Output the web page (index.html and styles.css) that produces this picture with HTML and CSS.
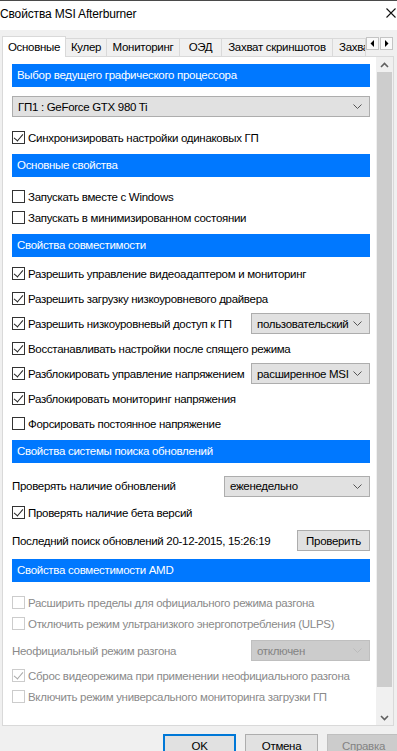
FILE: index.html
```html
<!DOCTYPE html>
<html lang="ru">
<head>
<meta charset="utf-8">
<title>Свойства MSI Afterburner</title>
<link rel="stylesheet" href="styles.css">
</head>
<body>
<div class="titlebar">
	<span class="title">Свойства MSI Afterburner</span>
	<svg class="close" width="10" height="10" viewBox="0 0 10 10"><path d="M0.5 0.5L9.5 9.5M9.5 0.5L0.5 9.5" stroke="#111" stroke-width="1.1" fill="none"/></svg>
</div>
<div class="tabs">
	<div class="tab active w64">Основные</div>
	<div class="tab w41">Кулер</div>
	<div class="tab w73">Мониторинг</div>
	<div class="tab w42">ОЭД</div>
	<div class="tab w111">Захват скриншотов</div>
	<div class="tab cut">Захват видео</div>
	<div class="tabarrow"><svg width="5" height="7" viewBox="0 0 5 7"><path d="M4 0L0.5 3.5L4 7Z" fill="#000"/></svg></div>
	<div class="tabarrow"><svg width="5" height="7" viewBox="0 0 5 7"><path d="M1 0L4.5 3.5L1 7Z" fill="#000"/></svg></div>
</div>
<div class="panel">
	<div class="content">
		<div class="hdr">Выбор ведущего графического процессора</div>
		<div class="combo full gap9"><span>ГП1 : GeForce GTX 980 Ti</span><svg width="9" height="5" viewBox="0 0 9 5"><path d="M0.5 0.5L4.5 4.5L8.5 0.5" stroke="#555" fill="none"/></svg></div>
		<div class="row gap10"><span class="cb on"></span>Синхронизировать настройки одинаковых ГП</div>

		<div class="hdr gap6">Основные свойства</div>
		<div class="row gap9"><span class="cb"></span>Запускать вместе с Windows</div>
		<div class="row"><span class="cb"></span>Запускать в минимизированном состоянии</div>

		<div class="hdr gap6">Свойства совместимости</div>
		<div class="row tall gap4"><span class="cb on"></span>Разрешить управление видеоадаптером и мониторинг</div>
		<div class="row tall"><span class="cb on"></span>Разрешить загрузку низкоуровневого драйвера</div>
		<div class="row tall"><span class="cb on"></span><span class="grow">Разрешить низкоуровневый доступ к ГП</span><div class="combo"><span>пользовательский</span><svg width="9" height="5" viewBox="0 0 9 5"><path d="M0.5 0.5L4.5 4.5L8.5 0.5" stroke="#555" fill="none"/></svg></div></div>
		<div class="row tall"><span class="cb on"></span>Восстанавливать настройки после спящего режима</div>
		<div class="row tall"><span class="cb on"></span><span class="grow">Разблокировать управление напряжением</span><div class="combo"><span>расширенное MSI</span><svg width="9" height="5" viewBox="0 0 9 5"><path d="M0.5 0.5L4.5 4.5L8.5 0.5" stroke="#555" fill="none"/></svg></div></div>
		<div class="row tall"><span class="cb on"></span>Разблокировать мониторинг напряжения</div>
		<div class="row tall"><span class="cb"></span>Форсировать постоянное напряжение</div>

		<div class="hdr gap4">Свойства системы поиска обновлений</div>
		<div class="row mid gap12"><span class="grow">Проверять наличие обновлений</span><div class="combo wide"><span>еженедельно</span><svg width="9" height="5" viewBox="0 0 9 5"><path d="M0.5 0.5L4.5 4.5L8.5 0.5" stroke="#555" fill="none"/></svg></div></div>
		<div class="row gap5"><span class="cb on"></span>Проверять наличие бета версий</div>
		<div class="row gap7"><span class="grow">Последний поиск обновлений 20-12-2015, 15:26:19</span><div class="btn small">Проверить</div></div>

		<div class="hdr gap8">Свойства совместимости AMD</div>
		<div class="row off gap10"><span class="cb"></span>Расширить пределы для официального режима разгона</div>
		<div class="row off"><span class="cb"></span>Отключить режим ультранизкого энергопотребления (ULPS)</div>
		<div class="row off gap6"><span class="grow">Неофициальный режим разгона</span><div class="combo"><span>отключен</span><svg width="9" height="5" viewBox="0 0 9 5"><path d="M0.5 0.5L4.5 4.5L8.5 0.5" stroke="#bbb" fill="none"/></svg></div></div>
		<div class="row off gap4"><span class="cb on"></span>Сброс видеорежима при применении неофициального разгона</div>
		<div class="row off"><span class="cb"></span>Включить режим универсального мониторинга загрузки ГП</div>
	</div>
	<div class="scrollbar">
		<div class="sarrow"><svg width="9" height="6" viewBox="0 0 9 6"><path d="M1 5L4.5 1.5L8 5" stroke="#606060" stroke-width="1.6" fill="none"/></svg></div>
		<div class="thumb"></div>
		<div class="track"></div>
		<div class="sarrow"><svg width="9" height="6" viewBox="0 0 9 6"><path d="M1 1L4.5 4.5L8 1" stroke="#606060" stroke-width="1.6" fill="none"/></svg></div>
	</div>
</div>
<div class="footer">
	<div class="btn default">OK</div>
	<div class="btn">Отмена</div>
	<div class="btn disabled">Справка</div>
</div>
</body>
</html>
```

FILE: styles.css
```css
*{margin:0;padding:0;box-sizing:border-box;}
body{width:397px;height:751px;overflow:hidden;background:#f0f0f0;font:11.5px "Liberation Sans",Arial,sans-serif;letter-spacing:-0.3px;color:#000;}

/* заголовок окна */
.titlebar{height:30px;background:#fff;border-top:1px solid #4a4a4a;display:flex;justify-content:space-between;align-items:flex-start;padding:5px 1px 0 0;line-height:16px;font-size:12px;letter-spacing:-0.15px;}
.titlebar .close{margin-top:2px;}

/* вкладки */
.tabs{height:26px;display:flex;align-items:flex-end;padding-left:2px;position:relative;z-index:1;}
.tab{height:18px;border:1px solid #d9d9d9;border-bottom:0;margin-left:-1px;text-align:center;line-height:17px;white-space:nowrap;overflow:hidden;background:#f0f0f0;flex:none;}
.tab.active{height:21px;margin-left:0;margin-bottom:-1px;background:#fff;line-height:20px;}
.w64{width:64px;}.w41{width:42px;}.w73{width:74px;}.w42{width:43px;}.w111{width:112px;}
.tab.cut{width:34px;text-align:left;padding-left:6px;}
.tabarrow{width:13px;height:13px;margin:0 1px 6px 0;border:1px solid #c4c4c4;background:#fafafa;display:flex;align-items:center;justify-content:center;flex:none;}

/* содержимое вкладки */
.panel{margin-left:2px;width:392px;height:670px;border:1px solid #d9d9d9;background:#fff;display:flex;}
.content{width:373px;height:668px;overflow:hidden;padding:7px 6px 0 9px;flex:none;}
.hdr{height:23px;line-height:23px;padding-left:5px;background:#0078ff;color:#fff;}
.row{height:21px;display:flex;align-items:center;white-space:nowrap;}
.row.tall{height:25px;}
.row.mid{height:22px;}
.grow{flex:1;min-width:0;overflow:hidden;}
.gap4{margin-top:4px;}.gap5{margin-top:5px;}.gap6{margin-top:6px;}.gap7{margin-top:7px;}
.gap8{margin-top:8px;}.gap9{margin-top:9px;}.gap10{margin-top:10px;}.gap12{margin-top:12px;}

.cb{width:13px;height:13px;border:1px solid #333;background:#fff;margin-right:3px;flex:none;position:relative;}
.cb.on::after{content:"";position:absolute;left:3px;top:0;width:4px;height:8px;border:solid #222;border-width:0 1.2px 1.2px 0;transform:rotate(40deg);}
.row.off{color:#8a8a8a;}
.row.off .cb{border-color:#cccccc;}
.row.off .cb.on::after{border-color:#a8a8a8;}

.combo{width:119px;height:21px;border:1px solid #adadad;background:#e1e1e1;display:flex;align-items:center;justify-content:space-between;padding:0 7px 0 5px;flex:none;}
.combo.full{width:100%;}
.combo.wide{width:146px;}
.row.off .combo{background:#cccccc;border-color:#bfbfbf;color:#838383;}

.btn{width:73px;height:23px;border:1px solid #adadad;background:#e1e1e1;display:flex;align-items:center;justify-content:center;flex:none;}
.btn.small{height:21px;}
.btn.default{border:2px solid #0078d7;}
.btn.disabled{background:#cccccc;border-color:#bfbfbf;color:#838383;}

/* полоса прокрутки */
.scrollbar{width:17px;height:668px;background:#f0f0f0;display:flex;flex-direction:column;flex:none;}
.sarrow{height:15px;display:flex;align-items:center;justify-content:center;flex:none;}
.thumb{height:615px;margin:0 1px;background:#cdcdcd;}
.track{flex:1;}

/* кнопки внизу */
.footer{display:flex;gap:9px;padding:8px 0 0 163px;}
```
